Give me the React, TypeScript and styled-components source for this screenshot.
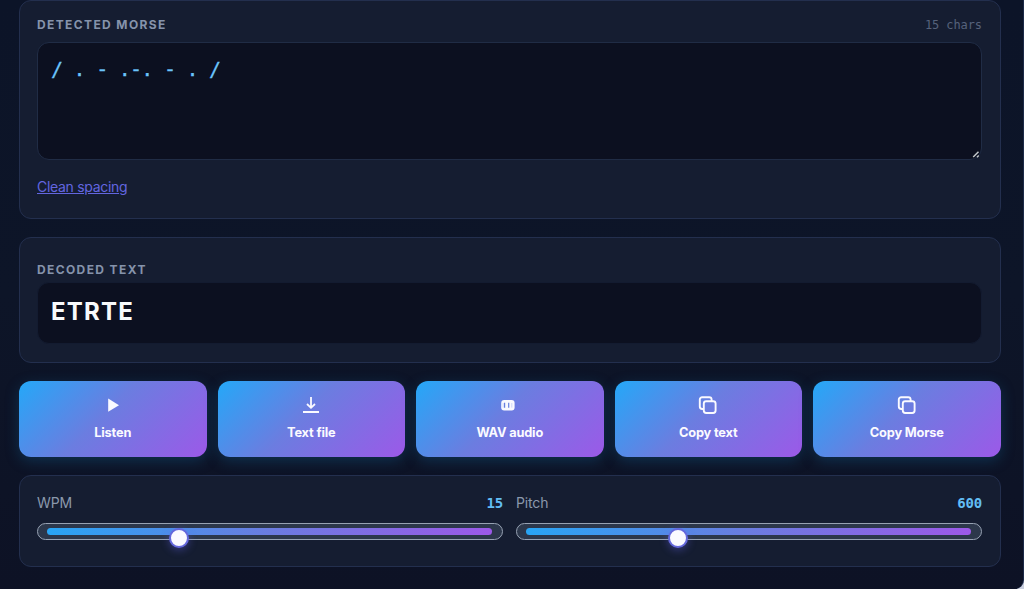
import React from "react";
import styled, { createGlobalStyle } from "styled-components";

const mono = `"DejaVu Sans Mono", "Liberation Mono", monospace`;

const GlobalStyle = createGlobalStyle`
  *, *::before, *::after { box-sizing: border-box; }
  body {
    margin: 0;
    background: #c9cede;
    font-family: Inter, "Liberation Sans", sans-serif;
    color: #f8fafc;
    overflow: hidden;
  }
  button { font-family: inherit; }
`;

const Shell = styled.main`
  width: 1024px;
  height: 589px;
  padding: 0 23px 0 19px;
  display: flex;
  flex-direction: column;
  gap: 18px;
  background: linear-gradient(180deg, #0c1428 0%, #0d1528 50%, #0d1225 100%);
  border-right: 1px solid #1c2947;
  border-bottom-right-radius: 9px;
`;

const Panel = styled.section<{ $height: number; $top: number }>`
  flex: none;
  height: ${(p) => p.$height}px;
  margin-right: -1px;
  padding: ${(p) => p.$top}px 18px 0 17px;
  border: 1px solid #232f4e;
  border-radius: 12px;
  background: #151d31;
`;

const Head = styled.div`
  display: flex;
  justify-content: space-between;
  align-items: center;
  height: 16px;
`;

const Label = styled.h2`
  margin: 0;
  font-size: 12px;
  line-height: 16px;
  font-weight: 700;
  letter-spacing: 1.38px;
  color: #8593ab;
`;

const Count = styled.span`
  font: 12px/16px ${mono};
  letter-spacing: -0.1px;
  color: #56627b;
`;

const MorseField = styled.div`
  position: relative;
  height: 118px;
  margin-top: 9px;
  padding: 12px 13px;
  border: 1px solid #202c45;
  border-radius: 12px;
  background: #0c1020;
  color: #6bc4fb;
  font: 20px/28px ${mono};
  letter-spacing: -0.75px;
  white-space: pre;
  -webkit-text-stroke: 0.3px #6bc4fb;
`;

const Grip = styled.svg`
  position: absolute;
  right: 0;
  bottom: 0;
`;

const CleanLink = styled.a`
  display: block;
  width: max-content;
  margin-top: 17px;
  font-size: 14px;
  line-height: 20px;
  letter-spacing: -0.3px;
  color: #6366e0;
  text-decoration: underline;
`;

const Decoded = styled.div`
  height: 62px;
  margin-top: 4px;
  padding: 0 13px;
  border: 1px solid #131b30;
  border-radius: 12px;
  background: #0c1020;
  font-size: 24px;
  font-weight: 700;
  line-height: 57px;
  letter-spacing: 1.2px;
`;

const Actions = styled.div`
  flex: none;
  display: grid;
  grid-template-columns: repeat(5, 1fr);
  gap: 11px;
  height: 76px;
  margin-right: -0.5px;
`;

const ActionButton = styled.button`
  display: flex;
  flex-direction: column;
  align-items: center;
  gap: 8px;
  padding: 14px 0 0;
  border: 0;
  border-radius: 12px;
  color: #fafaff;
  font-size: 12.8px;
  line-height: 20px;
  font-weight: 700;
  letter-spacing: -0.18px;
  background: linear-gradient(135deg, #24a8f8 0%, #6b7de0 45%, #9c59e8 100%);
  box-shadow: 0 4px 14px rgba(20, 100, 150, 0.36);
  svg { display: block; }
`;

const Sliders = styled.div`
  display: grid;
  grid-template-columns: 1fr 1fr;
  gap: 13px;
`;

const SliderHead = styled.div`
  display: flex;
  justify-content: space-between;
  font-size: 14px;
  line-height: 20px;
  letter-spacing: -0.15px;
  color: #8b98ac;
`;

const Value = styled.span`
  font: 700 14px/20px ${mono};
  letter-spacing: -0.2px;
  color: #62bdf5;
`;

const Rail = styled.div`
  position: relative;
  height: 17px;
  margin-top: 10px;
  padding: 4px 10px 4px 9px;
  border: 1px solid #97a2b3;
  border-radius: 9px;
  background: #2c374b;
`;

const Track = styled.div`
  height: 7px;
  border-radius: 4px;
  background: linear-gradient(90deg, #28a5f5, #6b7ce0 50%, #9c59e8);
`;

const Thumb = styled.span`
  position: absolute;
  top: 4px;
  width: 20px;
  height: 20px;
  margin-left: -10px;
  border: 2px solid #6468dc;
  border-radius: 50%;
  background: #fafaff;
  box-shadow: 0 2px 8px rgba(99, 102, 241, 0.42);
`;

const PlayIcon = () => (
  <svg width="20" height="20" viewBox="0 0 20 20">
    <path d="M5.2 3.6 16 10.2 5.2 16.8Z" fill="currentColor" />
  </svg>
);

const DownloadIcon = () => (
  <svg width="20" height="20" viewBox="0 0 20 20" fill="none" stroke="currentColor" strokeWidth="1.8">
    <path d="M10 2v10.5M6 9 10 12.8 14 9M2 17h16" />
  </svg>
);

const WaveIcon = () => (
  <svg width="20" height="20" viewBox="0 0 20 20">
    <rect x="1.2" y="5" width="13.4" height="10.6" rx="3" fill="currentColor" />
    <path d="M4.6 7.8v4.9M8.7 7.8v4.9" stroke="#6680df" strokeWidth="1.2" />
    <path d="M3.2 8v4.6M11.8 8v4.6" stroke="#c3cdf6" strokeWidth="0.8" />
  </svg>
);

const CopyIcon = () => (
  <svg width="20" height="20" viewBox="0 0 20 20" fill="none" stroke="currentColor" strokeWidth="1.9">
    <rect x="5.8" y="6.2" width="11.8" height="11.8" rx="2.4" />
    <path d="M5.8 14H4.2A2.4 2.4 0 0 1 1.8 11.6V4.6A2.4 2.4 0 0 1 4.2 2.2h7A2.4 2.4 0 0 1 13.6 4.6V6" />
  </svg>
);

const actions = [
  { label: "Listen", Icon: PlayIcon },
  { label: "Text file", Icon: DownloadIcon },
  { label: "WAV audio", Icon: WaveIcon },
  { label: "Copy text", Icon: CopyIcon },
  { label: "Copy Morse", Icon: CopyIcon },
];

const sliders = [
  { label: "WPM", value: 15, offset: 140.5 },
  { label: "Pitch", value: 600, offset: 160.5 },
];

export default function App() {
  return (
    <>
      <GlobalStyle />
      <Shell>
        <Panel $height={219} $top={16}>
          <Head>
            <Label>DETECTED MORSE</Label>
            <Count>15 chars</Count>
          </Head>
          <MorseField>
            / . - .-. - . /
            <Grip width="9" height="9" viewBox="0 0 9 9" stroke="#c3c8cc" strokeWidth="1.5">
              <path d="M1.2 7 6.5 1.7M5 7.2 6.7 5.5" />
            </Grip>
          </MorseField>
          <CleanLink>Clean spacing</CleanLink>
        </Panel>
        <Panel $height={126} $top={24}>
          <Label>DECODED TEXT</Label>
          <Decoded>ETRTE</Decoded>
        </Panel>
        <Actions>
          {actions.map(({ label, Icon }) => (
            <ActionButton key={label}>
              <Icon />
              {label}
            </ActionButton>
          ))}
        </Actions>
        <Panel $height={92} $top={17}>
          <Sliders>
            {sliders.map(({ label, value, offset }) => (
              <div key={label}>
                <SliderHead>
                  {label}
                  <Value>{value}</Value>
                </SliderHead>
                <Rail>
                  <Track />
                  <Thumb style={{ left: offset }} />
                </Rail>
              </div>
            ))}
          </Sliders>
        </Panel>
      </Shell>
    </>
  );
}
